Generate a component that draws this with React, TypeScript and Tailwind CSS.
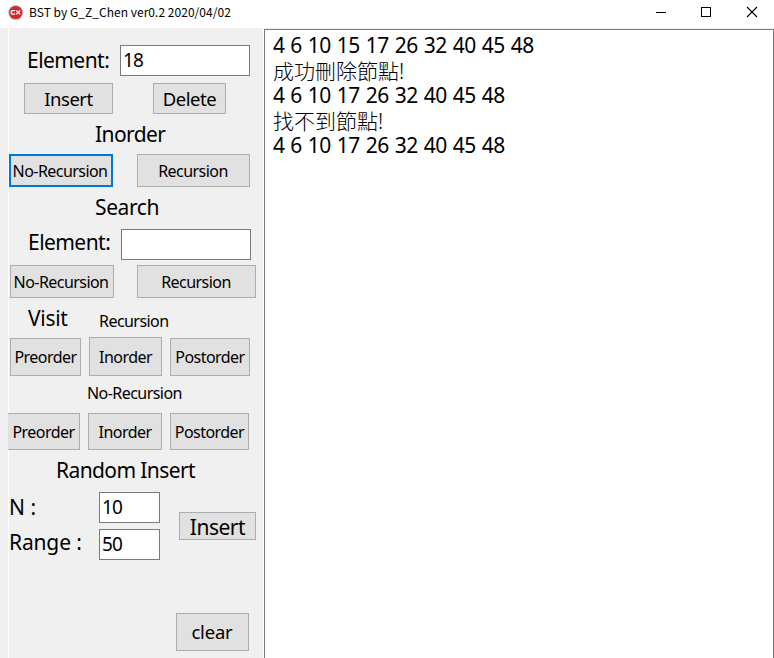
import type { ReactNode } from "react";

function Button({ className, children }: { className: string; children: ReactNode }) {
  return (
    <button
      className={`flex shrink-0 items-center justify-center whitespace-nowrap border border-[#adadad] bg-[#e1e1e1] leading-none ${className}`}
    >
      {children}
    </button>
  );
}

function Field({ value, className }: { value: string; className: string }) {
  return (
    <input
      defaultValue={value}
      spellCheck={false}
      className={`shrink-0 border border-[#7a7a7a] bg-white px-[2px] pb-px text-[19px] leading-none tracking-[-0.9px] outline-none ${className}`}
    />
  );
}

function Label({ className, children }: { className: string; children: ReactNode }) {
  return <span className={`shrink-0 whitespace-pre leading-none ${className}`}>{children}</span>;
}

const big = "text-[21px]";
const medium = "text-[18.5px] tracking-[-0.5px] pt-[2px]";
const small = "text-[16px] tracking-[-0.55px]";

function TitleBar() {
  return (
    <header className="flex h-7 shrink-0 items-center bg-white">
      <svg className="mb-[3px] ml-2 h-4 w-4 shrink-0" viewBox="0 0 16 16">
        <circle cx="7.7" cy="7.6" r="7.5" fill="#c4bebf" />
        <circle cx="7.7" cy="7.5" r="6.6" fill="#d9262f" />
        <path d="M7.1 5.7H4.8Q3 5.7 3 7.4T4.8 9.1H7.1M8.2 5.5 12.2 9.2M12.2 5.5 8.2 9.2" fill="none" stroke="#fff" strokeWidth="1.2" />
      </svg>
      <span className="ml-[5px] whitespace-nowrap pb-[4px] font-['Noto_Sans_CJK_TC','Noto_Sans',sans-serif] text-[12px] leading-4 tracking-[0.03px]">
        BST by G_Z_Chen ver0.2 2020/04/02
      </span>
      <svg className="ml-auto h-7 w-[138px] shrink-0" viewBox="0 0 138 28" fill="none" stroke="#000" shapeRendering="crispEdges">
        <path d="M20 12.5H30" />
        <rect x="65.5" y="7.5" width="9" height="9" />
        <path d="M111 7 121 17M121 7 111 17" shapeRendering="auto" strokeWidth="1.1" />
      </svg>
    </header>
  );
}

function Controls() {
  return (
    <aside className="ml-2 flex w-[256px] shrink-0 flex-col border-x border-white">
      <div className="mt-[17px] flex h-[31px] items-center">
        <Label className={`ml-[18px] w-[93px] ${big} tracking-[-0.55px]`}>Element:</Label>
        <Field value="18" className="h-[31px] w-[130px]" />
      </div>
      <div className="mt-[7px] flex">
        <Button className={`ml-[15px] h-[31px] w-[89px] ${medium}`}>Insert</Button>
        <Button className={`ml-10 h-[31px] w-[73px] ${medium}`}>Delete</Button>
      </div>
      <div className="flex h-10 items-center">
        <Label className={`ml-[86px] ${big} tracking-[-0.6px]`}>Inorder</Label>
      </div>
      <div className="flex">
        <Button className={`h-[33px] w-[104px] border-2 border-[#0078d7]! pr-[2px] ${small}`}>No-Recursion</Button>
        <Button className={`ml-6 h-[33px] w-[113px] pr-px ${small}`}>Recursion</Button>
      </div>
      <div className="flex h-[42px] items-center">
        <Label className={`ml-[86px] pb-[2px] ${big} tracking-[-0.4px]`}>Search</Label>
      </div>
      <div className="flex h-[31px] items-center">
        <Label className={`ml-[19px] w-[93px] pb-1 ${big} tracking-[-0.55px]`}>Element:</Label>
        <Field value="" className="h-[31px] w-[130px]" />
      </div>
      <div className="mt-[5px] flex">
        <Button className={`ml-px h-[33px] w-[104px] pr-[2px] ${small}`}>No-Recursion</Button>
        <Button className={`ml-[23px] h-[33px] w-[119px] pr-px ${small}`}>Recursion</Button>
      </div>
      <div className="flex h-[39px] items-center">
        <Label className={`ml-[19px] w-[71px] pt-[2px] ${big} tracking-[-0.3px]`}>Visit</Label>
        <Label className={`pt-[6px] ${small}`}>Recursion</Label>
      </div>
      <div className="flex items-end">
        <Button className={`ml-px h-[38px] w-[71px] ${small}`}>Preorder</Button>
        <Button className={`ml-2 h-[39px] w-[73px] ${small}`}>Inorder</Button>
        <Button className={`ml-2 h-[38px] w-[80px] ${small}`}>Postorder</Button>
      </div>
      <div className="flex h-[37px] items-center">
        <Label className={`ml-[78px] pb-[3px] ${small}`}>No-Recursion</Label>
      </div>
      <div className="flex">
        <Button className={`-ml-px h-[37px] w-[72px] border-l-0 ${small}`}>Preorder</Button>
        <Button className={`ml-2 h-[37px] w-[74px] ${small}`}>Inorder</Button>
        <Button className={`ml-2 h-[37px] w-[79px] ${small}`}>Postorder</Button>
      </div>
      <div className="flex h-[42px] items-center">
        <Label className={`ml-[47px] pb-[2px] ${big} tracking-[-0.6px]`}>Random Insert</Label>
      </div>
      <div className="flex">
        <div className="flex w-[90px] flex-col">
          <Label className={`flex h-[31px] items-center ${big}`}>N :</Label>
          <Label className={`mt-[5px] flex h-[28px] items-center ${big} tracking-[-0.15px]`}>Range :</Label>
        </div>
        <div className="flex flex-col gap-[6px]">
          <Field value="10" className="h-[31px] w-[61px]" />
          <Field value="50" className="h-[31px] w-[61px]" />
        </div>
        <Button className={`ml-[19px] mt-5 h-7 w-[77px] pt-[2px] ${big} tracking-[-0.5px]`}>Insert</Button>
      </div>
      <Button className="ml-[167px] mt-[53px] h-[38px] w-[73px] pr-px text-[18.5px] tracking-[-0.2px]">clear</Button>
    </aside>
  );
}

const log = [
  "4 6 10 15 17 26 32 40 45 48",
  "成功刪除節點!",
  "4 6 10 17 26 32 40 45 48",
  "找不到節點!",
  "4 6 10 17 26 32 40 45 48",
];

export default function App() {
  return (
    <div className="flex h-[658px] w-[774px] flex-col overflow-hidden bg-[#f0f0f0] font-['Noto_Sans','Noto_Sans_CJK_TC',sans-serif] text-black">
      <TitleBar />
      <main className="flex min-h-0 flex-1">
        <Controls />
        <section className="mt-px flex-1 border border-b-0 border-[#7a7a7a] bg-white pl-2 pt-1">
          {log.map((line, i) => (
            <p
              key={i}
              className={
                i % 2
                  ? "h-[25px] whitespace-pre text-[21px] font-light leading-[25px]"
                  : "h-[25px] whitespace-pre text-[21px] leading-[23px] tracking-[-0.4px] [word-spacing:0.7px]"
              }
            >
              {line}
            </p>
          ))}
        </section>
      </main>
    </div>
  );
}
